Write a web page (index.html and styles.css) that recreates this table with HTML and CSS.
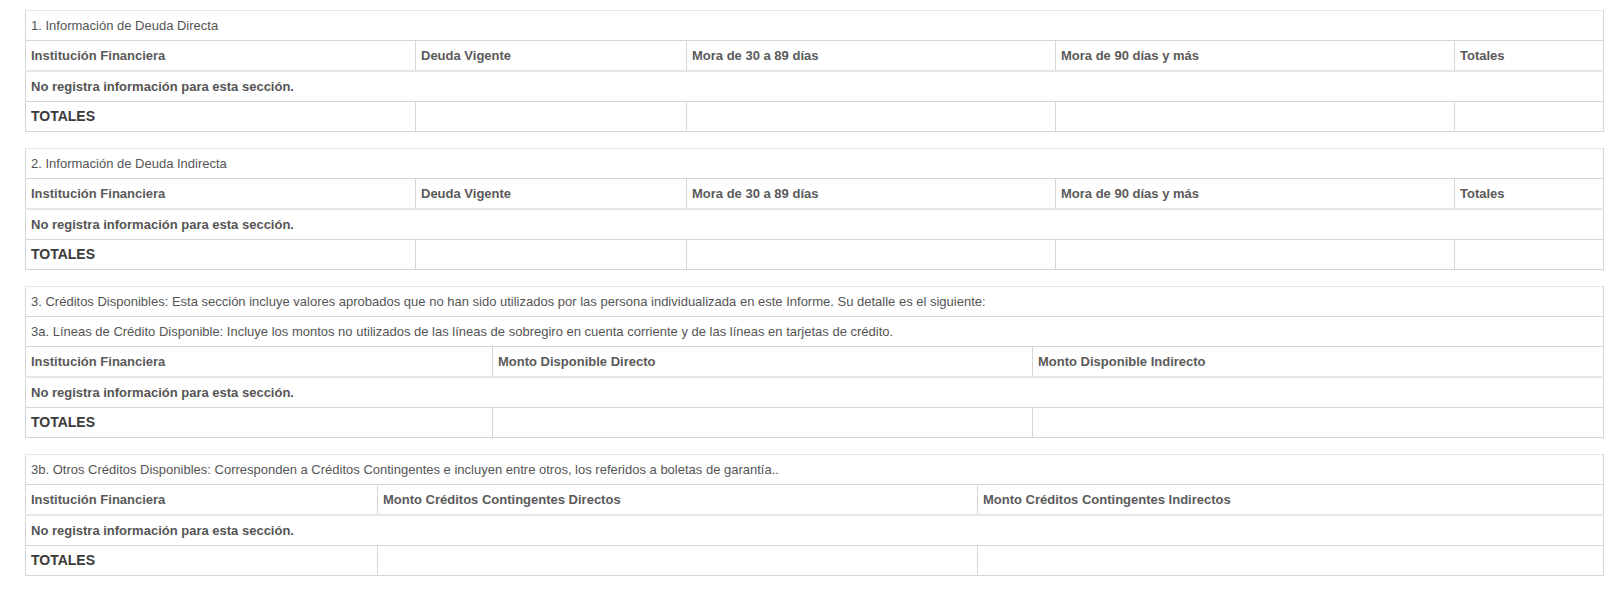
FILE: index.html
```html
<!DOCTYPE html>
<html lang="es">
<head>
<meta charset="utf-8">
<title>Informe de Deudas</title>
<link rel="stylesheet" href="styles.css">
</head>
<body>
<div class="page">
  <table class="report">
    <colgroup><col class="c1a"><col class="c1b"><col class="c1c"><col class="c1d"><col class="c1e"></colgroup>
    <thead>
      <tr><td class="title" colspan="5">1. Información de Deuda Directa</td></tr>
      <tr class="head"><th>Institución Financiera</th><th>Deuda Vigente</th><th>Mora de 30 a 89 días</th><th>Mora de 90 días y más</th><th>Totales</th></tr>
    </thead>
    <tbody>
      <tr><td class="empty" colspan="5">No registra información para esta sección.</td></tr>
      <tr><td class="total">TOTALES</td><td></td><td></td><td></td><td></td></tr>
    </tbody>
  </table>

  <table class="report">
    <colgroup><col class="c1a"><col class="c1b"><col class="c1c"><col class="c1d"><col class="c1e"></colgroup>
    <thead>
      <tr><td class="title" colspan="5">2. Información de Deuda Indirecta</td></tr>
      <tr class="head"><th>Institución Financiera</th><th>Deuda Vigente</th><th>Mora de 30 a 89 días</th><th>Mora de 90 días y más</th><th>Totales</th></tr>
    </thead>
    <tbody>
      <tr><td class="empty" colspan="5">No registra información para esta sección.</td></tr>
      <tr><td class="total">TOTALES</td><td></td><td></td><td></td><td></td></tr>
    </tbody>
  </table>

  <table class="report">
    <colgroup><col class="c3a"><col class="c3b"><col class="c3c"></colgroup>
    <thead>
      <tr><td class="title" colspan="3">3. Créditos Disponibles: Esta sección incluye valores aprobados que no han sido utilizados por las persona individualizada en este Informe. Su detalle es el siguiente:</td></tr>
      <tr><td class="subtitle" colspan="3">3a. Líneas de Crédito Disponible: Incluye los montos no utilizados de las líneas de sobregiro en cuenta corriente y de las líneas en tarjetas de crédito.</td></tr>
      <tr class="head"><th>Institución Financiera</th><th>Monto Disponible Directo</th><th>Monto Disponible Indirecto</th></tr>
    </thead>
    <tbody>
      <tr><td class="empty" colspan="3">No registra información para esta sección.</td></tr>
      <tr><td class="total">TOTALES</td><td></td><td></td></tr>
    </tbody>
  </table>

  <table class="report">
    <colgroup><col class="c4a"><col class="c4b"><col class="c4c"></colgroup>
    <thead>
      <tr><td class="title" colspan="3">3b. Otros Créditos Disponibles: Corresponden a Créditos Contingentes e incluyen entre otros, los referidos a boletas de garantía..</td></tr>
      <tr class="head"><th>Institución Financiera</th><th>Monto Créditos Contingentes Directos</th><th>Monto Créditos Contingentes Indirectos</th></tr>
    </thead>
    <tbody>
      <tr><td class="empty" colspan="3">No registra información para esta sección.</td></tr>
      <tr><td class="total">TOTALES</td><td></td><td></td></tr>
    </tbody>
  </table>
</div>
</body>
</html>
```

FILE: styles.css
```css
html, body {
  margin: 0;
  padding: 0;
  background: #ffffff;
}

body {
  font-family: "Liberation Sans", Arial, sans-serif;
  font-size: 13px;
  color: #555555;
}

.page {
  display: flex;
  flex-direction: column;
  gap: 16px;
  padding: 10px 18px 0 25px;
}

.report {
  width: 1579px;
  border-collapse: collapse;
  table-layout: fixed;
}

.report th,
.report td {
  border: 1px solid #d6d6d6;
  padding: 5px 5px;
  line-height: 19px;
  height: 19px;
  text-align: left;
  vertical-align: top;
  white-space: nowrap;
  overflow: hidden;
}

.report .title {
  font-weight: normal;
  border-top-color: #e8e8e8;
}

.report .subtitle {
  font-weight: normal;
}

.report .head th {
  font-weight: bold;
  color: #5a5a5a;
  border-bottom: 2px solid #e6e6e6;
}

.report .empty {
  font-weight: bold;
  color: #555555;
}

.report .total {
  font-weight: bold;
  font-size: 14px;
  color: #3a3a3a;
}

.c1a { width: 390px; }
.c1b { width: 271px; }
.c1c { width: 369px; }
.c1d { width: 399px; }
.c1e { width: 149px; }

.c3a { width: 467px; }
.c3b { width: 540px; }
.c3c { width: 571px; }

.c4a { width: 352px; }
.c4b { width: 600px; }
.c4c { width: 626px; }
```
